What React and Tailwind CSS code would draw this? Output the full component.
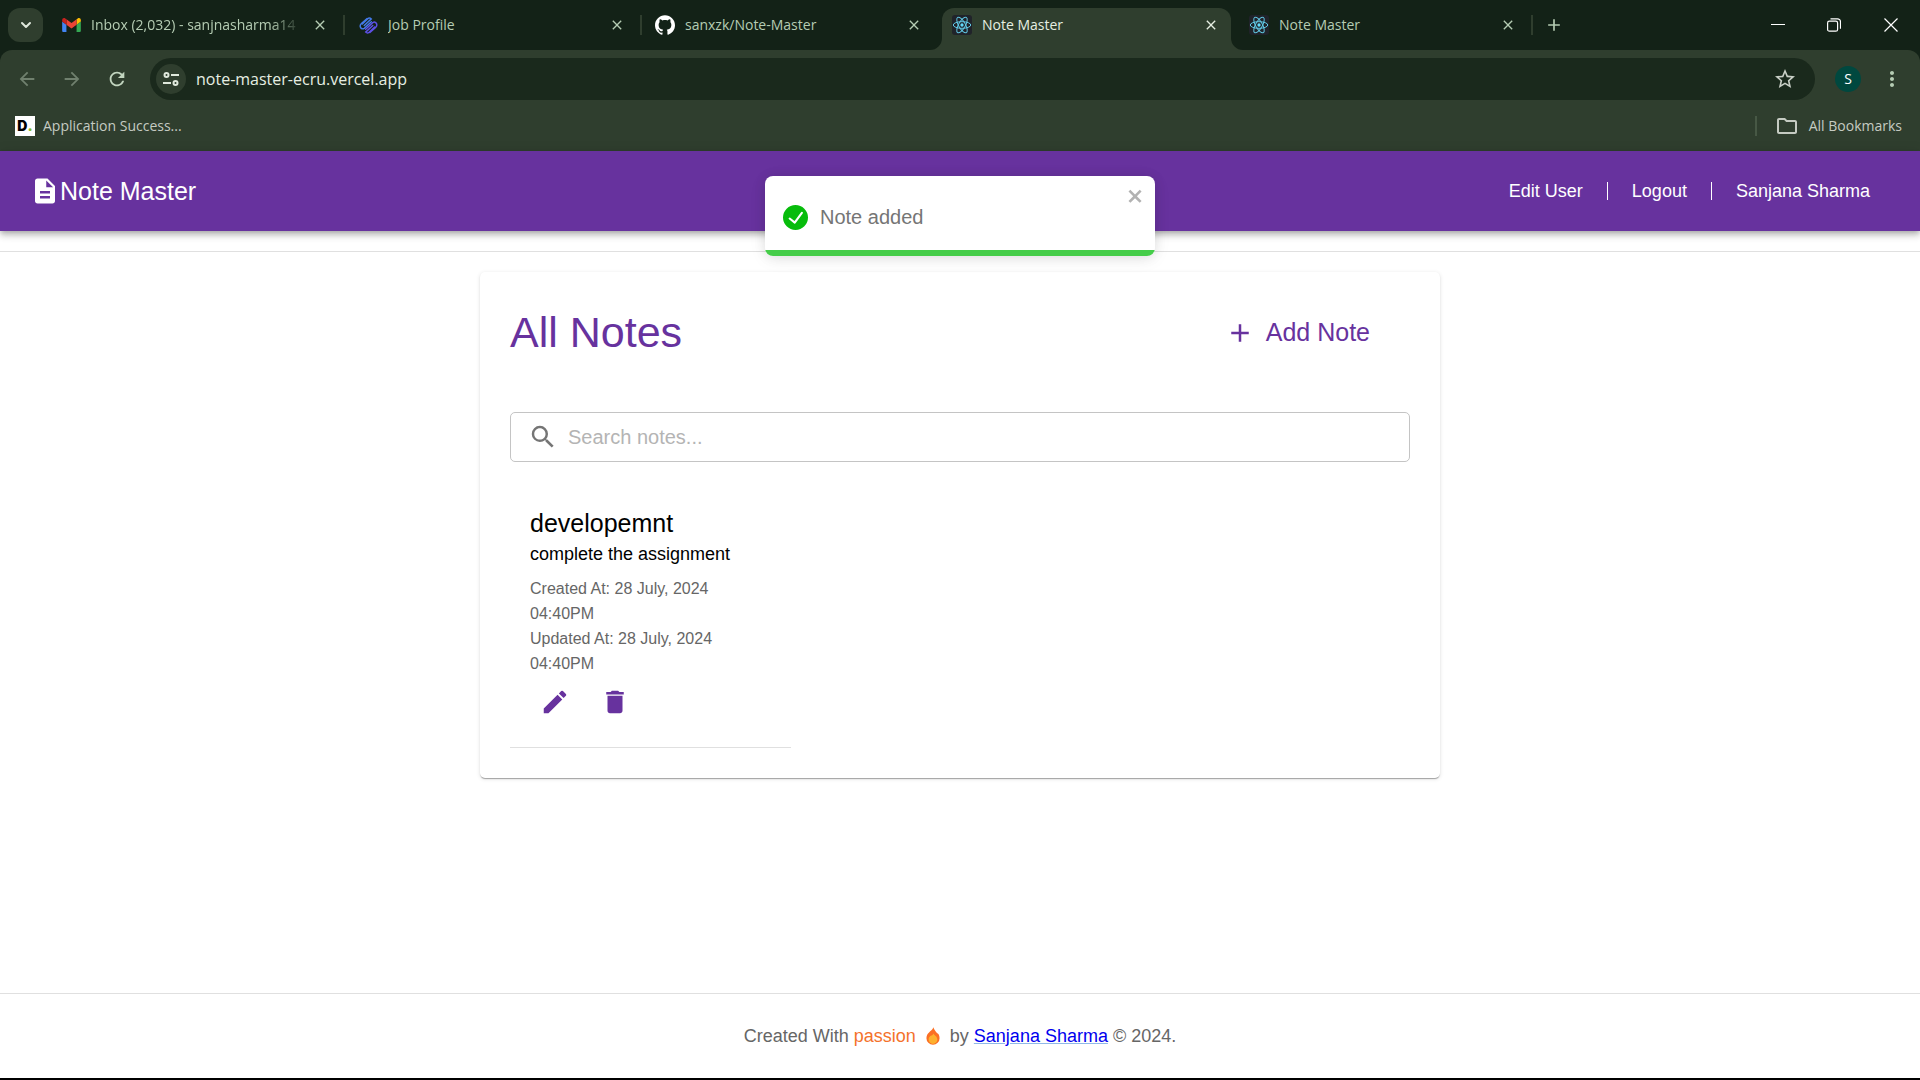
import React from "react";
import { SiGithub } from "react-icons/si";
import { LuChevronDown } from "react-icons/lu";
import {
  MdClose, MdAdd, MdArrowBack, MdArrowForward, MdRefresh, MdStarBorder, MdMoreVert,
  MdSearch, MdEdit, MdDelete, MdDescription, MdOutlineFolder,
} from "react-icons/md";

function GmailIcon() {
  return (
    <svg viewBox="52 42 88 66" className="h-[14px] w-[19px]" aria-hidden="true">
      <path fill="#4285f4" d="M58 108h14V74L52 59v43c0 3.32 2.69 6 6 6" />
      <path fill="#34a853" d="M120 108h14c3.32 0 6-2.69 6-6V59l-20 15" />
      <path fill="#fbbc04" d="M120 48v26l20-15v-8c0-7.42-8.47-11.65-14.4-7.2" />
      <path fill="#ea4335" d="M72 74V48l24 18 24-18v26L96 92" />
      <path fill="#c5221f" d="M52 51v8l20 15V48l-5.6-4.2c-5.94-4.45-14.4-.22-14.4 7.2" />
    </svg>
  );
}

function JobIcon() {
  return (
    <svg viewBox="0 0 20 18" className="h-[17px] w-[19px]" fill="none" strokeWidth="1.5" strokeLinecap="round" aria-hidden="true">
      <path stroke="#4379e8" d="M8.500 1.500 2.500 7C-.5 10 2.500 14 5.500 12L13 5M5.500 9 13 2C11.500 .5 10 1 9 2L3.500 7.500" />
      <path stroke="#5d50e6" d="M11.500 16.500 17.500 11C20.500 8 17.500 4 14.500 6L7 13M14.500 9 7 16C8.500 17.500 10 17 11 16L16.500 10.500" />
    </svg>
  );
}

function ReactIcon() {
  return (
    <span className="flex size-5 items-center justify-center rounded-[3px] bg-[#20232a]">
      <svg viewBox="-12 -12 24 24" className="size-5" fill="none" stroke="#61c8e4" strokeWidth="1.2" aria-hidden="true">
        <circle r="2" fill="#61dafb" stroke="none" />
        <ellipse rx="10.500" ry="4" />
        <ellipse rx="10.500" ry="4" transform="rotate(60)" />
        <ellipse rx="10.500" ry="4" transform="rotate(120)" />
      </svg>
    </span>
  );
}

function SiteInfoIcon() {
  return (
    <svg viewBox="0 0 16 16" className="size-4" fill="none" stroke="#dfe8dc" strokeWidth="2" aria-hidden="true">
      <circle cx="3.500" cy="4" r="2" />
      <path d="M8 4h8M0 12h8" />
      <circle cx="12.500" cy="12" r="2" />
    </svg>
  );
}

function FlameIcon() {
  return (
    <svg viewBox="0 0 16 20" className="h-[18px] w-[14px]" aria-hidden="true">
      <path fill="#fb6f24" d="M8.500 0c.5 2.500 2 4 4 6.500 2 .5 3 3 3 6a7.500 7.500 0 0 1-15 0c0-3 1.300-5 3-6.500C5 4 7.500 3 8.500 0" />
      <path fill="#fdb02e" d="M8.500 7c.5 2 4.500 3 4.500 7a5 5 0 0 1-10 0c0-2 1-3.500 2.300-4.300C7 9 8.200 8.500 8.500 7" />
    </svg>
  );
}

const tabs = [
  { title: "Inbox (2,032) - sanjnasharma14", icon: <GmailIcon />, fade: true },
  { title: "Job Profile", icon: <JobIcon /> },
  { title: "sanxzk/Note-Master", icon: <SiGithub className="size-5 text-white" /> },
  { title: "Note Master", icon: <ReactIcon />, active: true },
  { title: "Note Master", icon: <ReactIcon /> },
];

function TabFoot({ right }) {
  return (
    <svg viewBox="0 0 12 12" className={right ? "absolute bottom-0 left-full size-3" : "absolute right-full bottom-0 size-3 -scale-x-100"} aria-hidden="true">
      <path fill="#2f3e2e" d="M0 0v12h12A12 12 0 0 1 0 0" />
    </svg>
  );
}

function Tab({ tab }) {
  return (
    <div className="relative flex min-w-0 flex-[0_1_297px] items-center px-1 pt-2">
      <div className={tab.active ? "relative flex h-[42px] w-full items-center rounded-t-xl bg-[#2f3e2e] pr-2.5 pb-2 pl-2.5 text-[#e6eee2]" : "flex h-[42px] w-full items-center pr-2.5 pb-2 pl-2.5 text-[#b5ccb3]"}>
        {tab.active && <TabFoot />}
        {tab.active && <TabFoot right />}
        <span className="flex w-5 shrink-0 justify-center">{tab.icon}</span>
        <span className={tab.fade ? "ml-2.5 min-w-0 flex-1 overflow-hidden whitespace-nowrap [mask-image:linear-gradient(to_right,black_85%,transparent)]" : "ml-2.5 min-w-0 flex-1 overflow-hidden whitespace-nowrap"}>{tab.title}</span>
        <button type="button" aria-label="Close tab" className="ml-2 flex size-5 shrink-0 items-center justify-center">
          <MdClose className="size-4" />
        </button>
      </div>
    </div>
  );
}

function Separator({ show }) {
  return <span className={show ? "-mr-px -ml-px h-5 w-0.5 shrink-0 self-center bg-[#2f3e2e]" : "hidden"} />;
}

function BrowserChrome() {
  return (
    <div className="bg-[#132217] font-['Open_Sans',sans-serif] text-sm">
      <div className="flex h-[50px] items-stretch">
        <button type="button" aria-label="Search tabs" className="mt-2 mr-1 ml-2 flex h-[34px] w-[35px] shrink-0 items-center justify-center rounded-xl bg-[#2f3e2e] text-[#dfe8dc]">
          <LuChevronDown className="size-4" strokeWidth={3} />
        </button>
        {tabs.map((tab, i) => (
          <React.Fragment key={i}>
            <Tab tab={tab} />
            <Separator show={i === 0 || i === 1 || i === 4} />
          </React.Fragment>
        ))}
        <button type="button" aria-label="New tab" className="ml-3 flex w-5 items-center justify-center text-[#b5ccb3]">
          <MdAdd className="size-5" />
        </button>
        <div className="ml-auto flex items-center text-white">
          <button type="button" aria-label="Minimize" className="flex w-14 justify-center">
            <svg viewBox="0 0 14 14" className="size-3.5" stroke="currentColor" aria-hidden="true"><path d="M0 6.500h14" /></svg>
          </button>
          <button type="button" aria-label="Restore" className="flex w-14 justify-center">
            <svg viewBox="0 0 14 14" className="size-3.5" fill="none" stroke="currentColor" strokeWidth="1.2" aria-hidden="true">
              <rect x=".6" y="3.200" width="10" height="10" rx="1.800" />
              <path d="M3.500.8h7a3 3 0 0 1 3 3v7" />
            </svg>
          </button>
          <button type="button" aria-label="Close window" className="flex w-[58px] justify-center">
            <svg viewBox="0 0 14 14" className="size-3.5" stroke="currentColor" strokeWidth="1.200" aria-hidden="true"><path d="M.5.5l13 13M13.500.5l-13 13" /></svg>
          </button>
        </div>
      </div>

      <div className="rounded-t-xl bg-[#2f3e2e]">
        <div className="flex items-center pt-2">
          <div className="flex w-[150px] shrink-0 items-center gap-[23px] pl-4 text-[#70806e]">
            <button type="button" aria-label="Back"><MdArrowBack className="size-[22px]" /></button>
            <button type="button" aria-label="Forward"><MdArrowForward className="size-[22px]" /></button>
            <button type="button" aria-label="Reload" className="text-[#c2d5bf]"><MdRefresh className="size-[22px]" /></button>
          </div>
          <div className="flex h-[42px] flex-1 items-center rounded-full bg-[#1a291c] pr-[18px] pl-1.5">
            <button type="button" aria-label="Site information" className="flex size-[30px] items-center justify-center rounded-full bg-[#2f3e2e]">
              <SiteInfoIcon />
            </button>
            <input aria-label="Address" defaultValue="note-master-ecru.vercel.app" className="ml-2.5 min-w-0 flex-1 bg-transparent text-base text-[#e6eee2] outline-none" />
            <button type="button" aria-label="Bookmark this page" className="text-[#c9cfc6]"><MdStarBorder className="size-6" /></button>
          </div>
          <button type="button" aria-label="Profile" className="ml-5 flex size-[26px] items-center justify-center rounded-full bg-[#00483f] text-sm text-white">S</button>
          <button type="button" aria-label="Browser menu" className="mr-4 ml-[19px] text-[#b5ccb3]"><MdMoreVert className="size-6" /></button>
        </div>
        <div className="flex h-[51px] items-center pr-[18px] pl-[15px] text-[#c5cbc2]">
          <a href="#bookmark" className="flex items-center gap-2">
            <span className="flex size-5 items-center justify-center bg-white font-['Inter',sans-serif] text-sm font-black text-black">D<span className="text-[#86bc25]">.</span></span>
            Application Success...
          </a>
          <span className="ml-auto h-5 w-0.5 bg-[#475845]" />
          <a href="#bookmarks" className="ml-[18px] flex items-center gap-2.5">
            <MdOutlineFolder className="size-6" />
            All Bookmarks
          </a>
        </div>
      </div>
    </div>
  );
}

function Header() {
  return (
    <header className="relative flex h-20 items-center bg-[#67329e] px-[30px] text-white shadow-[0_2px_5px_-1px_rgba(0,0,0,0.2),0_5px_6px_rgba(0,0,0,0.14),0_1px_12px_rgba(0,0,0,0.12)]">
      <a href="#home" className="flex items-center text-[25px]">
        <MdDescription className="size-[30px]" />
        <span className="pt-0.5">Note Master</span>
      </a>
      <nav className="ml-auto flex items-center pr-5 text-lg">
        <a href="#edit">Edit User</a>
        <span className="mx-6 h-[18px] w-px bg-white" />
        <a href="#logout">Logout</a>
        <span className="mx-6 h-[18px] w-px bg-white" />
        <a href="#user">Sanjana Sharma</a>
      </nav>
      <div role="status" className="absolute top-[25px] left-1/2 z-10 flex h-20 w-[390px] -translate-x-1/2 items-center overflow-hidden rounded-lg bg-white pt-0.5 pl-[18px] text-xl text-[#757575] shadow-[0_1px_12px_rgba(0,0,0,0.1),0_3px_19px_rgba(0,0,0,0.06)]">
        <svg viewBox="0 0 24 24" className="size-[25px]" fill="#07bc0c" aria-hidden="true">
          <path d="M12 0a12 12 0 1012 12A12.014 12.014 0 0012 0zm6.927 8.200l-6.845 9.289a1.011 1.011 0 01-1.430.188l-4.888-3.908a1 1 0 111.250-1.562l4.076 3.261 6.227-8.451a1 1 0 111.610 1.183z" />
        </svg>
        <span className="ml-3">Note added</span>
        <button type="button" aria-label="Dismiss" className="absolute top-2.5 right-2.5 text-[#b2b2b2]">
          <svg viewBox="0 0 14 16" className="h-5 w-[18px]" fill="currentColor" aria-hidden="true">
            <path fillRule="evenodd" d="M7.710 8.230l3.750 3.750-1.480 1.480-3.750-3.750-3.750 3.750L1 11.980l3.750-3.750L1 4.480 2.480 3l3.750 3.750L9.980 3l1.480 1.480-3.750 3.750z" />
          </svg>
        </button>
        <span className="absolute inset-x-0 bottom-0 h-1.5 bg-[#45cd49]" />
      </div>
    </header>
  );
}

function Note() {
  return (
    <article className="w-[281px] border-b border-[#e0e0e0] px-5 pt-4 pb-[30px]">
      <h2 className="text-[25px] leading-10 text-black">developemnt</h2>
      <p className="text-lg leading-[23px] text-black">complete the assignment</p>
      <p className="mt-2.5 text-base leading-[25px] text-[#666]">Created At: 28 July, 2024 04:40PM</p>
      <p className="text-base leading-[25px] text-[#666]">Updated At: 28 July, 2024 04:40PM</p>
      <div className="mt-[11px] flex gap-[30px] pl-2.5 text-[#67329e]">
        <button type="button" aria-label="Edit note"><MdEdit className="size-[30px]" /></button>
        <button type="button" aria-label="Delete note"><MdDelete className="size-[30px]" /></button>
      </div>
    </article>
  );
}

export default function App() {
  return (
    <div className="flex min-h-screen flex-col bg-white font-['Liberation_Sans',sans-serif]">
      <BrowserChrome />
      <Header />
      <div className="mt-5 border-b border-[#e0e0e0]" />
      <main className="mx-auto mt-5 w-1/2 rounded-[5px] bg-white px-[30px] pb-[30px] shadow-[0_2px_1px_-1px_rgba(0,0,0,0.2),0_1px_1px_rgba(0,0,0,0.14),0_1px_4px_rgba(0,0,0,0.12)]">
        <div className="flex items-center justify-between pt-[30px] pr-10 pb-[50px] text-[#67329e]">
          <h1 className="text-[43px] leading-[60px]">All Notes</h1>
          <button type="button" className="flex items-center gap-[11px] pt-0.5 text-[25px]">
            <MdAdd className="size-[30px]" />
            Add Note
          </button>
        </div>
        <div className="flex h-[50px] items-center rounded-[5px] border border-[#c4c4c4] pl-[17px]">
          <MdSearch className="size-[30px] text-[#757575]" />
          <input type="text" aria-label="Search notes" placeholder="Search notes..." className="ml-2.5 min-w-0 flex-1 bg-transparent text-xl outline-none placeholder:text-[#b4b4b4]" />
        </div>
        <div className="mt-[25px]">
          <Note />
        </div>
      </main>
      <footer className="mt-auto flex h-[87px] items-center justify-center border-t border-b-2 border-t-[#e0e0e0] border-b-black text-lg text-[#666]">
        <p className="flex items-center">
          <span className="whitespace-pre">Created With </span>
          <span className="text-[#f4722b]">passion</span>
          <span className="mx-2.5"><FlameIcon /></span>
          <span className="whitespace-pre">by </span>
          <a href="#author" className="text-[#0000ee] underline decoration-[#8fb8e8]">Sanjana Sharma</a>
          <span className="whitespace-pre"> © 2024.</span>
        </p>
      </footer>
    </div>
  );
}
